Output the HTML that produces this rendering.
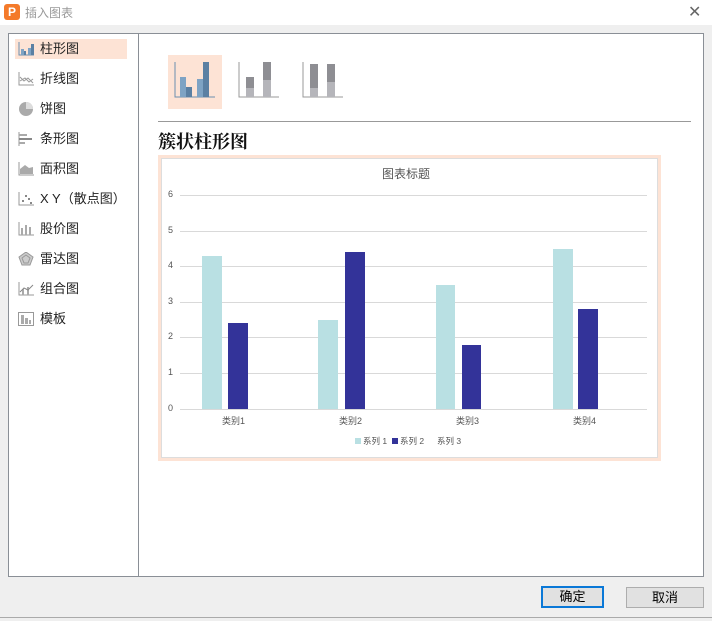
<!DOCTYPE html>
<html><head><meta charset="utf-8"><style>
*{margin:0;padding:0;box-sizing:border-box}
body{width:712px;height:621px;background:#efefef;position:relative;overflow:hidden;font-family:"Liberation Sans","Noto Sans CJK SC",sans-serif;}
.abs{position:absolute}
.item{position:absolute;left:15px;width:112px;height:20px;font-size:13px;color:#222;line-height:20px;padding-left:25px}
.item svg{position:absolute;left:3px;top:3px}
.sel{background:#fde3d5}
.t{position:absolute;font-size:9px;color:#555}
</style></head><body>
<div class="abs" style="left:0;top:0;width:712px;height:25px;background:#fff"></div>
<div class="abs" style="left:4px;top:4px;width:16px;height:16px;background:#f47a2a;border-radius:3px;color:#fff;font-size:12px;font-weight:bold;line-height:16px;text-align:center">P</div>
<div class="abs" style="left:25px;top:4px;font-size:12px;color:#999">插入图表</div>
<div class="abs" style="left:688px;top:2px;font-size:16px;color:#666">✕</div>
<div class="abs" style="left:8px;top:33px;width:696px;height:544px;background:#fff;border:1px solid #8a8f96"></div>
<div class="abs" style="left:138px;top:34px;width:1px;height:542px;background:#8a8f96"></div>

<div class="item sel" style="top:39px"><svg width="16" height="14"><path d="M1 0V13H16" stroke="#6a8fb0" fill="none"/><rect x="3" y="7" width="3" height="6" fill="#7ea3c4"/><rect x="6" y="9" width="2" height="4" fill="#5b80a3"/><rect x="10" y="6" width="3" height="7" fill="#7ea3c4"/><rect x="13" y="2" width="3" height="11" fill="#5b80a3"/></svg>柱形图</div>
<div class="item" style="top:69px"><svg width="16" height="14"><path d="M1 0V13H16M2 5L6 9L10 6L15 11M2 9L7 6L11 10L15 7" stroke="#999" fill="none"/></svg>折线图</div>
<div class="item" style="top:99px"><svg width="16" height="14"><circle cx="8" cy="7" r="7" fill="#aaa"/><path d="M8 7V0A7 7 0 0 1 15 7Z" fill="#ddd"/></svg>饼图</div>
<div class="item" style="top:129px"><svg width="16" height="14"><path d="M1 0V14" stroke="#999"/><rect x="1" y="2" width="8" height="2" fill="#aaa"/><rect x="1" y="6" width="13" height="2" fill="#888"/><rect x="1" y="10" width="6" height="2" fill="#aaa"/></svg>条形图</div>
<div class="item" style="top:159px"><svg width="16" height="14"><path d="M1 0V13H16" stroke="#999" fill="none"/><path d="M2 12V7L7 3L11 6L15 5V12Z" fill="#aaa"/></svg>面积图</div>
<div class="item" style="top:189px"><svg width="16" height="14"><path d="M1 0V13H16" stroke="#999" fill="none"/><g fill="#888"><rect x="4" y="8" width="2" height="2"/><rect x="7" y="3" width="2" height="2"/><rect x="10" y="6" width="2" height="2"/><rect x="12" y="10" width="2" height="2"/></g></svg>X Y（散点图）</div>
<div class="item" style="top:219px"><svg width="16" height="14"><path d="M1 0V13H16" stroke="#999" fill="none"/><g fill="#aaa"><rect x="3" y="6" width="2" height="7"/><rect x="7" y="3" width="2" height="10"/><rect x="11" y="5" width="2" height="8"/></g></svg>股价图</div>
<div class="item" style="top:249px"><svg width="16" height="14"><path d="M8 0L15 5L12 13H4L1 5Z M8 3L12 6L10 11H6L4 6Z" stroke="#999" fill="#ccc"/></svg>雷达图</div>
<div class="item" style="top:279px"><svg width="16" height="14"><path d="M1 0V13H16" stroke="#999" fill="none"/><g fill="#aaa"><rect x="4" y="7" width="2" height="6"/><rect x="9" y="5" width="2" height="8"/></g><path d="M2 10L6 6L10 8L15 3" stroke="#888" fill="none"/></svg>组合图</div>
<div class="item" style="top:309px"><svg width="16" height="14"><rect x="0.5" y="0.5" width="15" height="13" stroke="#999" fill="none"/><g fill="#aaa"><rect x="3" y="3" width="3" height="9"/><rect x="7" y="6" width="3" height="6"/><rect x="11" y="8" width="2" height="4"/></g></svg>模板</div>

<div class="abs" style="left:168px;top:55px;width:54px;height:54px;background:#fde3d5"></div>
<svg class="abs" style="left:174px;top:60px" width="42" height="40"><path d="M1 2V37H41" stroke="#6a8fb0" fill="none" stroke-width="1"/><rect x="6" y="17" width="6" height="20" fill="#7ea3c4"/><rect x="12" y="27" width="6" height="10" fill="#5b80a3"/><rect x="23" y="19" width="6" height="18" fill="#7ea3c4"/><rect x="29" y="2" width="6" height="35" fill="#5b80a3"/></svg>
<svg class="abs" style="left:238px;top:60px" width="42" height="40"><path d="M1 2V37H41" stroke="#999" fill="none"/><rect x="8" y="17" width="8" height="11" fill="#8e8e93"/><rect x="8" y="28" width="8" height="9" fill="#b5b5ba"/><rect x="25" y="2" width="8" height="18" fill="#8e8e93"/><rect x="25" y="20" width="8" height="17" fill="#b5b5ba"/></svg>
<svg class="abs" style="left:302px;top:60px" width="42" height="40"><path d="M1 2V37H41" stroke="#999" fill="none"/><rect x="8" y="4" width="8" height="24" fill="#8e8e93"/><rect x="8" y="28" width="8" height="9" fill="#b5b5ba"/><rect x="25" y="4" width="8" height="18" fill="#8e8e93"/><rect x="25" y="22" width="8" height="15" fill="#b5b5ba"/></svg>
<div class="abs" style="left:158px;top:121px;width:533px;height:1px;background:#999"></div>
<div class="abs" style="left:158px;top:128px;font-size:18px;font-weight:bold;font-family:'Noto Serif CJK SC',serif;color:#111">簇状柱形图</div>

<div class="abs" style="left:158px;top:155px;width:503px;height:306px;border:3px solid #fde3d5"></div>
<div class="abs" style="left:161px;top:158px;width:497px;height:300px;border:1px solid #ddd"></div>
<div class="abs" style="left:382px;top:165px;font-size:12px;color:#555">图表标题</div>
<svg class="abs" style="left:160px;top:185px" width="500" height="230">
<g stroke="#d9d9d9" stroke-width="1">
<line x1="20" y1="10.5" x2="487" y2="10.5"/><line x1="20" y1="46.5" x2="487" y2="46.5"/><line x1="20" y1="81.5" x2="487" y2="81.5"/><line x1="20" y1="117.5" x2="487" y2="117.5"/><line x1="20" y1="152.5" x2="487" y2="152.5"/><line x1="20" y1="188.5" x2="487" y2="188.5"/><line x1="20" y1="224.5" x2="487" y2="224.5"/>
</g>
<g fill="#b9e0e3"><rect x="42" y="71" width="20" height="153"/><rect x="158" y="135" width="20" height="89"/><rect x="276" y="100" width="19" height="124"/><rect x="393" y="64" width="20" height="160"/></g>
<g fill="#333399"><rect x="68" y="138" width="20" height="86"/><rect x="185" y="67" width="20" height="157"/><rect x="302" y="160" width="19" height="64"/><rect x="418" y="124" width="20" height="100"/></g>
</svg>
<div class="t" style="left:168px;top:189px">6</div><div class="t" style="left:168px;top:225px">5</div><div class="t" style="left:168px;top:260px">4</div><div class="t" style="left:168px;top:296px">3</div><div class="t" style="left:168px;top:331px">2</div><div class="t" style="left:168px;top:367px">1</div><div class="t" style="left:168px;top:403px">0</div>
<div class="t" style="left:222px;top:414px">类别1</div><div class="t" style="left:339px;top:414px">类别2</div><div class="t" style="left:456px;top:414px">类别3</div><div class="t" style="left:573px;top:414px">类别4</div>
<div class="abs" style="left:355px;top:438px;width:6px;height:6px;background:#b9e0e3"></div>
<div class="t" style="left:363px;top:435px;font-size:8.5px">系列 1</div>
<div class="abs" style="left:392px;top:438px;width:6px;height:6px;background:#333399"></div>
<div class="t" style="left:400px;top:435px;font-size:8.5px">系列 2</div>
<div class="t" style="left:437px;top:435px;font-size:8.5px">系列 3</div>

<div class="abs" style="left:541px;top:586px;width:63px;height:22px;border:2px solid #0a78d7;background:#e1e1e1;font-size:13px;text-align:center;line-height:18px">确定</div>
<div class="abs" style="left:626px;top:587px;width:78px;height:21px;border:1px solid #adadad;background:#e1e1e1;font-size:13px;text-align:center;line-height:19px">取消</div>
<div class="abs" style="left:0;top:617px;width:712px;height:1px;background:#aaa"></div>
</body></html>
